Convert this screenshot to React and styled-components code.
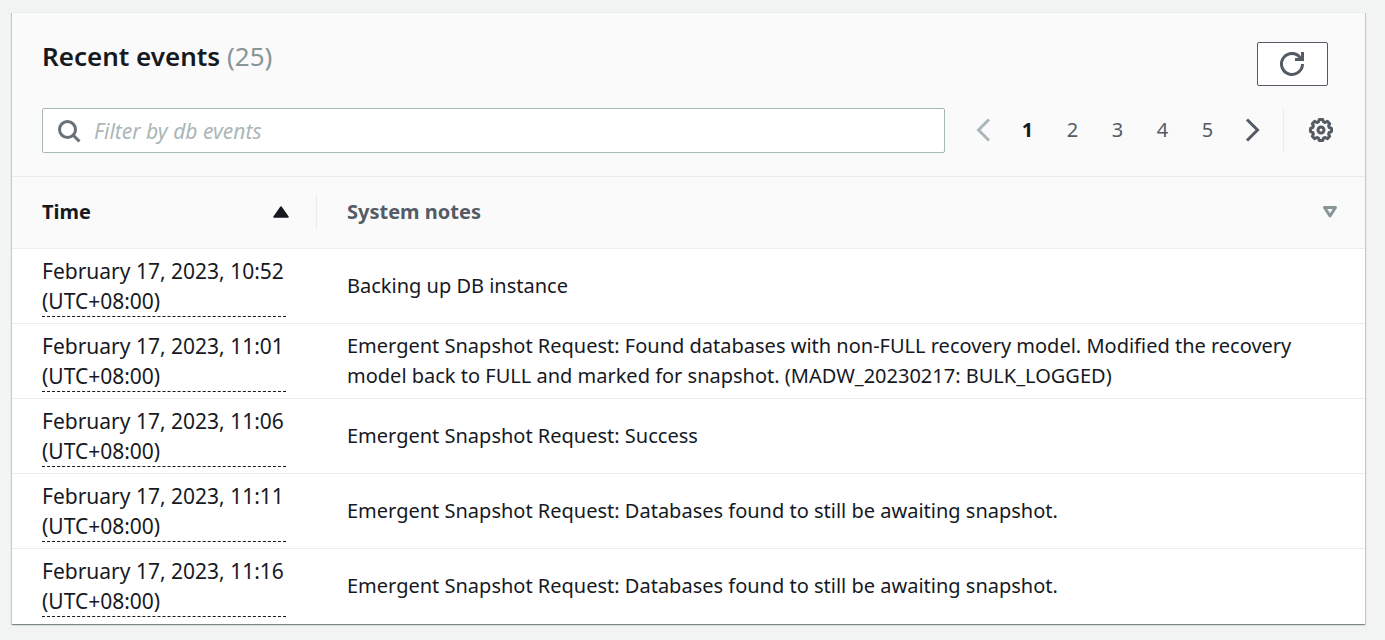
import React from "react";
import styled, { createGlobalStyle } from "styled-components";

const GlobalStyle = createGlobalStyle`
  *, *::before, *::after { box-sizing: border-box; }
  body {
    margin: 0;
    background: #f2f3f3;
    color: #16191f;
    font-family: "Noto Sans", "Open Sans", sans-serif;
    font-size: 20px;
    line-height: 30px;
  }
  button, input { font: inherit; color: inherit; }
`;

const Page = styled.main`
  padding: 12px 20px 15px 12px;
`;

const Card = styled.section`
  background: #ffffff;
  border-top: 1px solid #eaeded;
  box-shadow: 0 1px 1px 0 rgba(0, 28, 36, 0.3), 1px 1px 1px 0 rgba(0, 28, 36, 0.15),
    -1px 1px 1px 0 rgba(0, 28, 36, 0.15);
`;

const CardHeader = styled.header`
  padding: 29px 32px 23px 30px;
  background: #fafafa;
  border-bottom: 1px solid #eaeded;
`;

const TitleBar = styled.div`
  display: flex;
  align-items: flex-start;
  justify-content: space-between;
  padding-right: 5px;
`;

const Title = styled.h2`
  margin: 0;
  font-size: 26px;
  line-height: 28px;
  font-weight: 600;
`;

const Count = styled.span`
  color: #879596;
  font-weight: 400;
`;

const RefreshButton = styled.button`
  display: flex;
  align-items: center;
  justify-content: center;
  width: 71px;
  height: 44px;
  padding: 0 1px 0 0;
  color: #545b64;
  background: #ffffff;
  border: 1px solid #545b64;
  border-radius: 2px;
`;

const Toolbar = styled.div`
  display: flex;
  align-items: flex-start;
  margin-top: 22px;
`;

const FilterBox = styled.label`
  display: flex;
  flex: 1;
  align-items: center;
  gap: 13px;
  min-width: 0;
  height: 45px;
  padding: 0 14px;
  color: #687078;
  background: #ffffff;
  border: 1px solid #aab7b8;
  border-radius: 2px;
`;

const FilterInput = styled.input`
  flex: 1;
  min-width: 0;
  padding: 0;
  color: #16191f;
  font-size: 21px;
  background: transparent;
  border: 0;
  outline: 0;

  &::placeholder {
    color: #aab7b8;
    font-style: italic;
    opacity: 1;
  }
`;

const Pagination = styled.nav`
  display: flex;
  margin-left: 15px;
`;

const PageButton = styled.button`
  display: flex;
  align-items: center;
  justify-content: center;
  width: 45px;
  height: 44px;
  padding: 0;
  color: ${({ $current }) => ($current ? "#16191f" : "#545b64")};
  font-weight: ${({ $current }) => ($current ? 700 : 400)};
  background: transparent;
  border: 0;

  &:disabled { color: #aab7b8; }
`;

const Preferences = styled.div`
  display: flex;
  align-items: center;
  height: 44px;
  margin-left: 8px;
  padding-left: 25px;
  border-left: 1px solid #eaeded;
`;

const IconButton = styled.button`
  display: flex;
  padding: 0;
  color: #545b64;
  background: transparent;
  border: 0;
`;

const Table = styled.table`
  width: 100%;
  table-layout: fixed;
  border-collapse: separate;
  border-spacing: 0;
`;

const TimeColumn = styled.col`
  width: 305px;
`;

const HeaderCell = styled.th`
  height: 72px;
  padding: 0 0 2px;
  text-align: left;
  font-weight: 700;
  color: ${({ $sorted }) => ($sorted ? "#16191f" : "#545b64")};
  background: #fafafa;
  border-bottom: 1px solid #eaeded;
`;

const SortButton = styled.button`
  display: flex;
  align-items: center;
  justify-content: space-between;
  width: 100%;
  height: 36px;
  padding: 0 27px 0 30px;
  background: transparent;
  border: 0;
  border-right: ${({ $divided }) => ($divided ? "1px solid #eaeded" : "0")};
`;

const Row = styled.tr`
  &:last-child td { border-bottom-color: transparent; }
`;

const Cell = styled.td`
  vertical-align: middle;
  border-bottom: 1px solid #eaeded;
`;

const TimeCell = styled(Cell)`
  padding: 7px 31px 6px 30px;
  font-size: 21px;
`;

const NoteCell = styled(Cell)`
  padding: 7px 30px;
`;

const Timestamp = styled.time`
  display: block;
  border-bottom: 1px dashed #16191f;
`;

const SearchIcon = () => (
  <svg width="24" height="24" viewBox="0 0 24 24" fill="none" stroke="currentColor" strokeWidth="3" aria-hidden="true">
    <circle cx="10.5" cy="10.5" r="8" />
    <path d="M16 16l6.5 6.5" />
  </svg>
);

const RefreshIcon = () => (
  <svg width="24" height="24" viewBox="0 0 24 24" fill="none" stroke="currentColor" strokeWidth="3" aria-hidden="true">
    <path d="M22.5 12A10.5 10.5 0 1 1 18.5 3.7L21 7" />
    <path d="M15 7.5h7.5V0" />
  </svg>
);

const ChevronIcon = ({ direction }) => (
  <svg width="24" height="24" viewBox="0 0 24 24" fill="none" stroke="currentColor" strokeWidth="3" aria-hidden="true">
    <path d={direction === "left" ? "M18 1.5L7.5 12 18 22.5" : "M6 1.5L16.5 12 6 22.5"} />
  </svg>
);

const GearIcon = () => (
  <svg width="24" height="24" viewBox="0 0 24 24" fill="none" stroke="currentColor" strokeWidth="3" strokeLinejoin="round" aria-hidden="true">
    <path d="M10.3 1.5h3.4l.9 2.4 1.5.6 2.3-1.1 2.3 2.3-1.1 2.3.6 1.5 2.3.9v3.2l-2.3.9-.6 1.5 1.1 2.3-2.3 2.3-2.3-1.1-1.5.6-.9 2.4h-3.4l-.9-2.4-1.5-.6-2.3 1.1-2.3-2.3 1.1-2.3-.6-1.5-2.3-.9v-3.2l2.3-.9.6-1.5-1.1-2.3 2.3-2.3 2.3 1.1 1.5-.6z" />
    <circle cx="12" cy="12" r="3" />
  </svg>
);

const SortIcon = ({ active }) => (
  <svg width="16" height="12" viewBox="0 0 16 12" aria-hidden="true">
    {active ? (
      <path d="M8 1L15 11H1z" fill="#16191f" stroke="#16191f" strokeWidth="1.5" strokeLinejoin="round" />
    ) : (
      <path d="M2.5 1.5h11L8 10z" fill="none" stroke="#879596" strokeWidth="3" strokeLinejoin="round" />
    )}
  </svg>
);

const pages = [1, 2, 3, 4, 5];

const events = [
  { time: "10:52", note: "Backing up DB instance" },
  {
    time: "11:01",
    note: "Emergent Snapshot Request: Found databases with non-FULL recovery model. Modified the recovery model back to FULL and marked for snapshot. (MADW_20230217: BULK_LOGGED)",
  },
  { time: "11:06", note: "Emergent Snapshot Request: Success" },
  { time: "11:11", note: "Emergent Snapshot Request: Databases found to still be awaiting snapshot." },
  { time: "11:16", note: "Emergent Snapshot Request: Databases found to still be awaiting snapshot." },
];

export default function App() {
  return (
    <Page>
      <GlobalStyle />
      <Card>
        <CardHeader>
          <TitleBar>
            <Title>
              Recent events <Count>(25)</Count>
            </Title>
            <RefreshButton type="button" aria-label="Refresh events">
              <RefreshIcon />
            </RefreshButton>
          </TitleBar>
          <Toolbar>
            <FilterBox>
              <SearchIcon />
              <FilterInput type="text" placeholder="Filter by db events" aria-label="Filter by db events" />
            </FilterBox>
            <Pagination aria-label="Event pages">
              <PageButton type="button" disabled aria-label="Previous page">
                <ChevronIcon direction="left" />
              </PageButton>
              {pages.map((page) => (
                <PageButton
                  key={page}
                  type="button"
                  $current={page === 1}
                  aria-current={page === 1 ? "page" : undefined}
                >
                  {page}
                </PageButton>
              ))}
              <PageButton type="button" aria-label="Next page">
                <ChevronIcon direction="right" />
              </PageButton>
            </Pagination>
            <Preferences>
              <IconButton type="button" aria-label="Preferences">
                <GearIcon />
              </IconButton>
            </Preferences>
          </Toolbar>
        </CardHeader>
        <Table>
          <colgroup>
            <TimeColumn />
            <col />
          </colgroup>
          <thead>
            <tr>
              <HeaderCell scope="col" $sorted aria-sort="ascending">
                <SortButton type="button" $divided>
                  Time
                  <SortIcon active />
                </SortButton>
              </HeaderCell>
              <HeaderCell scope="col">
                <SortButton type="button">
                  System notes
                  <SortIcon />
                </SortButton>
              </HeaderCell>
            </tr>
          </thead>
          <tbody>
            {events.map(({ time, note }) => (
              <Row key={time}>
                <TimeCell>
                  <Timestamp dateTime={`2023-02-17T${time}+08:00`}>
                    February 17, 2023, {time} (UTC+08:00)
                  </Timestamp>
                </TimeCell>
                <NoteCell>{note}</NoteCell>
              </Row>
            ))}
          </tbody>
        </Table>
      </Card>
    </Page>
  );
}
